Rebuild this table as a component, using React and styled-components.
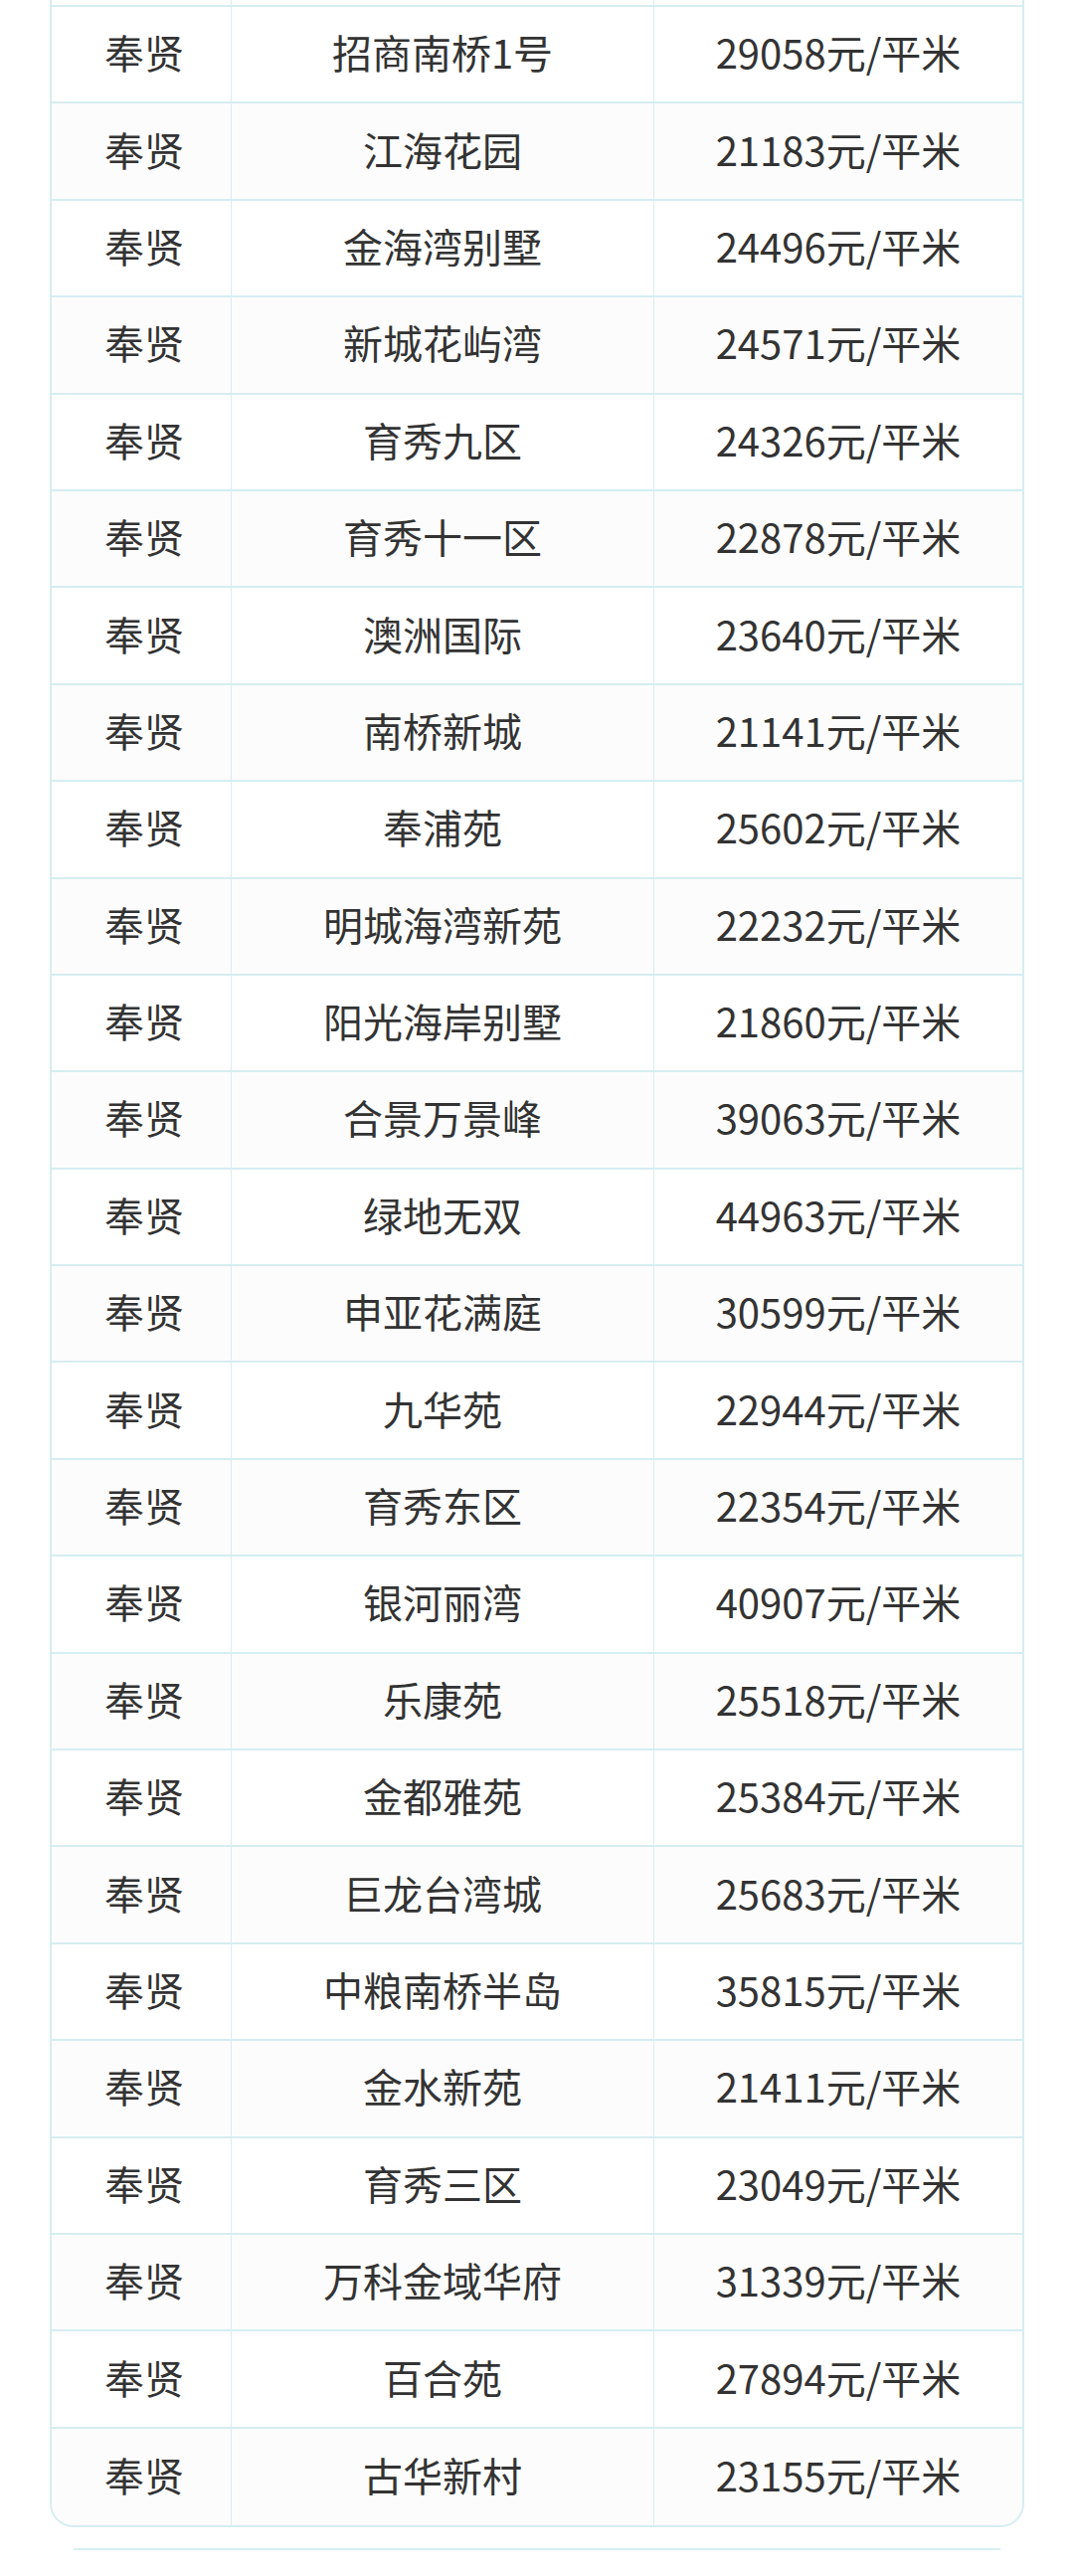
import styled, { createGlobalStyle } from 'styled-components';

const GlobalStyle = createGlobalStyle`
  html, body {
    margin: 0;
    padding: 0;
    background: #ffffff;
  }
  body {
    font-family: "Noto Sans CJK SC", "Noto Sans", sans-serif;
    color: #333333;
  }
`;

const Page = styled.div`
  width: 1080px;
  height: 2590px;
  overflow: hidden;
  padding: 0 50px;
  box-sizing: border-box;
`;

const Table = styled.div`
  border-left: 2px solid #d6edf1;
  border-right: 2px solid #d6edf1;
  border-bottom: 2px solid #d6edf1;
  border-radius: 0 0 24px 24px;
  overflow: hidden;
`;

const Row = styled.div`
  display: grid;
  grid-template-columns: 181px 425px 1fr;
  height: ${(p) => (p.$stub ? '7px' : '97.4px')};
  box-sizing: border-box;
  border-bottom: ${(p) => (p.$last ? 'none' : '2px solid #d6edf1')};
  background: ${(p) => (p.$shade ? '#fcfcfc' : '#ffffff')};
`;

const Cell = styled.div`
  display: flex;
  align-items: center;
  justify-content: center;
  font-size: 40px;
  line-height: 1;
  color: #333333;
  white-space: nowrap;
  padding-bottom: 5px;
  border-right: ${(p) => (p.$end ? 'none' : '1.5px solid #d9eef2')};
  padding-left: ${(p) => p.$shift || 0}px;
`;

const Divider = styled.div`
  margin: 21px 24px 0 24px;
  height: 2px;
  background: #d8eef1;
`;

const rows = [
  ['招商南桥1号', '29058'],
  ['江海花园', '21183'],
  ['金海湾别墅', '24496'],
  ['新城花屿湾', '24571'],
  ['育秀九区', '24326'],
  ['育秀十一区', '22878'],
  ['澳洲国际', '23640'],
  ['南桥新城', '21141'],
  ['奉浦苑', '25602'],
  ['明城海湾新苑', '22232'],
  ['阳光海岸别墅', '21860'],
  ['合景万景峰', '39063'],
  ['绿地无双', '44963'],
  ['申亚花满庭', '30599'],
  ['九华苑', '22944'],
  ['育秀东区', '22354'],
  ['银河丽湾', '40907'],
  ['乐康苑', '25518'],
  ['金都雅苑', '25384'],
  ['巨龙台湾城', '25683'],
  ['中粮南桥半岛', '35815'],
  ['金水新苑', '21411'],
  ['育秀三区', '23049'],
  ['万科金域华府', '31339'],
  ['百合苑', '27894'],
  ['古华新村', '23155'],
];

export default function App() {
  return (
    <>
      <GlobalStyle />
      <Page>
        <Table>
          <Row $stub>
            <Cell />
            <Cell />
            <Cell $end />
          </Row>
          {rows.map(([name, price], i) => (
            <Row key={name} $shade={i % 2 === 1} $last={i === rows.length - 1}>
              <Cell $shift={6}>奉贤</Cell>
              <Cell>{name}</Cell>
              <Cell $end>{price}元/平米</Cell>
            </Row>
          ))}
        </Table>
        <Divider />
      </Page>
    </>
  );
}
